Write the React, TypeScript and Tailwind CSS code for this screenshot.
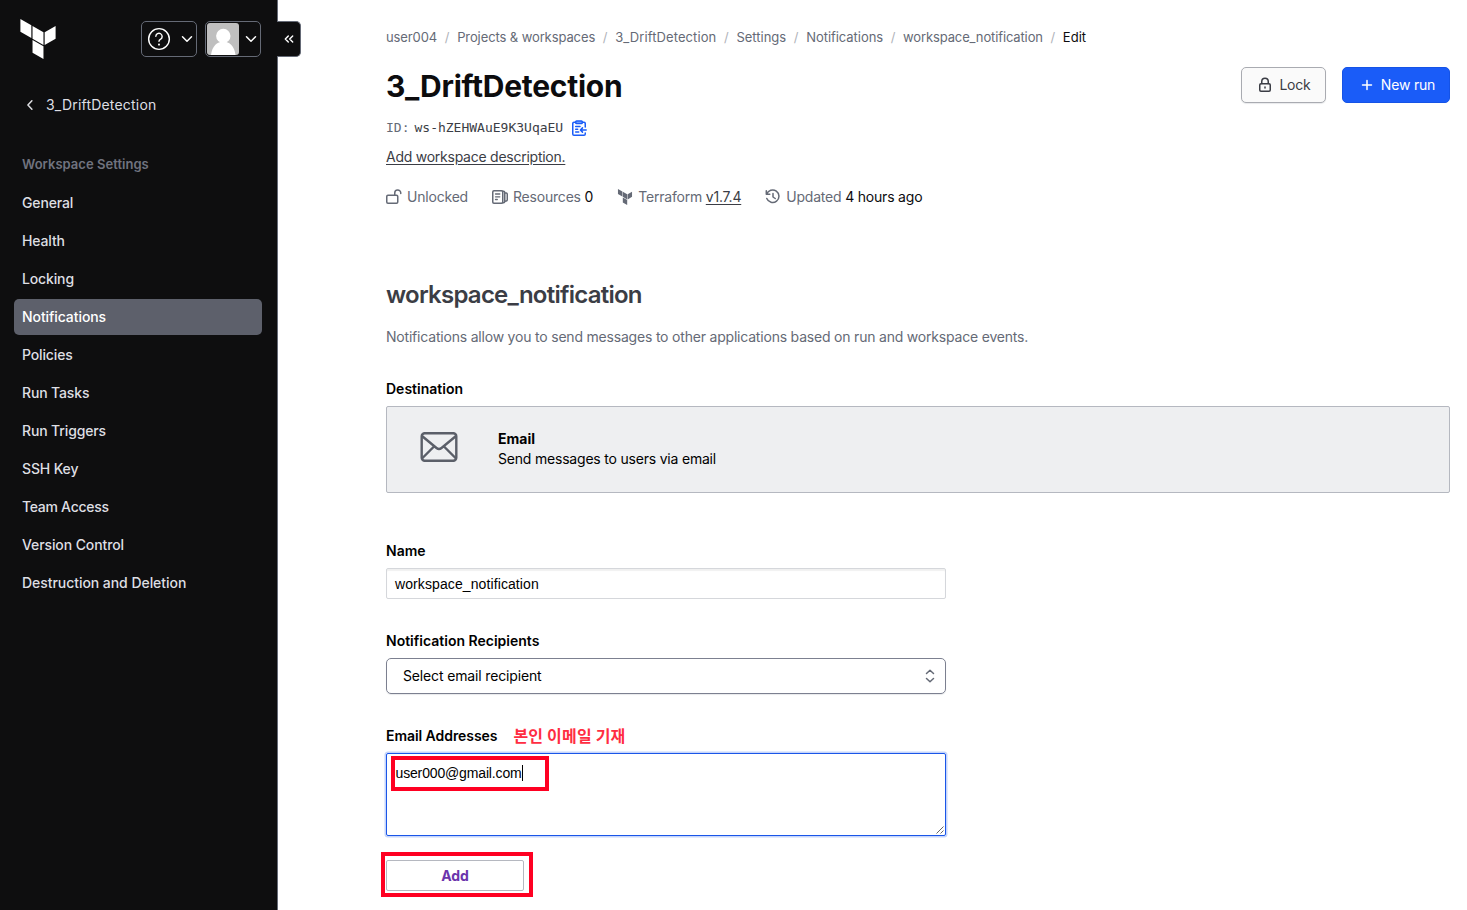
import { Fragment, type ReactNode } from "react";

const navItems = [
  { label: "General", tracking: "tracking-[-0.01em]" },
  { label: "Health", tracking: "tracking-[-0.01em]" },
  { label: "Locking", tracking: "tracking-[-0.01em]" },
  { label: "Notifications", tracking: "tracking-[-0.08px]" },
  { label: "Policies", tracking: "tracking-[-0.01em]" },
  { label: "Run Tasks", tracking: "tracking-[-0.01em]" },
  { label: "Run Triggers", tracking: "tracking-[-0.01em]" },
  { label: "SSH Key", tracking: "tracking-[-0.01em]" },
  { label: "Team Access", tracking: "tracking-[-0.28px]" },
  { label: "Version Control", tracking: "tracking-[-0.1px]" },
  { label: "Destruction and Deletion", tracking: "tracking-[-0.05px]" },
];

const crumbs = [
  { label: "user004", tracking: "tracking-[-0.1px]" },
  { label: "Projects & workspaces", tracking: "tracking-[-0.1px]" },
  { label: "3_DriftDetection", tracking: "tracking-[0.1px]" },
  { label: "Settings", tracking: "tracking-normal" },
  { label: "Notifications", tracking: "tracking-[-0.05px]" },
  { label: "workspace_notification", tracking: "tracking-[-0.13px]" },
];

function Icon({ children, className = "size-4", w = 1.5 }: { children: ReactNode; className?: string; w?: number }) {
  return (
    <svg
      viewBox="0 0 16 16"
      className={`shrink-0 ${className}`}
      fill="none"
      stroke="currentColor"
      strokeWidth={w}
      strokeLinecap="round"
      strokeLinejoin="round"
    >
      {children}
    </svg>
  );
}

function Terraform({ className }: { className: string }) {
  return (
    <svg viewBox="0 0 24 24" className={`shrink-0 ${className}`} fill="currentColor">
      <path d="M1.44 0v7.575l6.561 3.79V3.787zm21.12 4.227l-6.561 3.791v7.574l6.56-3.787zM8.72 4.23v7.575l6.561 3.787V8.018zm0 8.405v7.575L15.28 24v-7.578z" />
    </svg>
  );
}

function ChevronDown() {
  return (
    <Icon>
      <path d="M3.5 5.800 8 10.3 12.500 5.800" />
    </Icon>
  );
}

function Sidebar() {
  return (
    <aside className="relative flex w-[278px] shrink-0 flex-col border-r border-[#656a76] bg-[#0e0e0f] text-[#dedfe3]">
      <div className="flex h-[57px] items-end pr-4 pl-[18px] text-white">
        <Terraform className="-mb-[2px] size-10" />
        <div className="ml-auto flex gap-2">
          <button className="flex h-9 w-14 items-center justify-between rounded-[5px] border border-[#656a76] pr-px pl-[5px]">
            <Icon className="size-6" w={0.95}>
              <circle cx="8" cy="8" r="6.9" />
              <path d="M5.9 6.2a2.1 2.1 0 1 1 3.2 1.9C8.4 8.5 8 8.8 8 9.5" />
              <path d="M8 11.7v.05" strokeWidth={1.3} />
            </Icon>
            <ChevronDown />
          </button>
          <button className="flex h-9 w-14 items-center justify-between rounded-[5px] border border-[#656a76] pr-px pl-px">
            <svg viewBox="0 0 32 32" className="size-8 rounded-[3px] bg-[#bfbfbf]" fill="#fff">
              <circle cx="16.3" cy="13" r="7.2" />
              <path d="M4 32C5 23.500 10 18.500 16.300 18.500S27.500 23.500 28.500 32z" />
            </svg>
            <ChevronDown />
          </button>
        </div>
      </div>
      <button className="absolute top-[21px] left-[277px] flex h-9 w-6 items-center justify-center rounded-r-[5px] border border-l-0 border-[#656a76] bg-[#0e0e0f] text-white">
        <Icon className="size-4" w={1.4}>
          <path d="M7.300 5 4.300 8l3 3M11.700 5l-3 3 3 3" />
        </Icon>
      </button>

      <div className="mt-[36px] flex h-6 items-center gap-2 pl-[22px] text-sm">
        <Icon>
          <path d="M9.900 3.800 5.900 8l4 4.200" />
        </Icon>
        <span className="tracking-[0.2px]">3_DriftDetection</span>
      </div>

      <h2 className="mt-[35px] pl-[22px] text-[13px] leading-6 font-semibold tracking-[0.03px] text-[#70737f]">
        Workspace Settings
      </h2>
      <nav className="mt-[9px] flex flex-col gap-0.5 px-[14px] pr-[15px]">
        {navItems.map(({ label, tracking }) => (
          <a
            key={label}
            className={`flex h-9 items-center px-2 text-sm font-medium ${tracking} ${
              label === "Notifications" ? "rounded-[5px] bg-[#5d606b] text-white" : ""
            }`}
          >
            {label}
          </a>
        ))}
      </nav>
    </aside>
  );
}

function Header() {
  return (
    <header>
      <nav className="flex h-7 items-center text-[13px] text-[#656a76]">
        {crumbs.map(({ label, tracking }) => (
          <Fragment key={label}>
            <span className={tracking}>{label}</span>
            <span className="w-5 text-center text-[#b0b3ba]">/</span>
          </Fragment>
        ))}
        <span className="text-[#0c0c0e]">Edit</span>
      </nav>

      <div className="mt-[15px] flex items-start justify-between">
        <h1 className="text-[30px] leading-[38px] font-bold tracking-[-0.27px] text-[#0c0c0e]">3_DriftDetection</h1>
        <div className="flex gap-4 text-sm tracking-[-0.2px]">
          <button className="flex h-9 w-[85px] items-center justify-center gap-[6px] rounded-[5px] border border-[#a9abb1] bg-[#fafafa] pl-px text-[#3b3d45] shadow-[0_1px_1px_rgba(101,106,118,0.15)]">
            <Icon>
              <rect x="2.750" y="6.750" width="10.500" height="7.500" rx="1.200" />
              <path d="M4.750 6.500V4.500a3.250 3.250 0 0 1 6.500 0v2M8 10v1" />
            </Icon>
            Lock
          </button>
          <button className="flex h-9 w-[108px] items-center justify-center gap-[6px] rounded-[5px] border border-[#1553e6] bg-[#1a5cf8] pl-[2px] text-white">
            <Icon>
              <path d="M8 3.500v9M3.500 8h9" />
            </Icon>
            New run
          </button>
        </div>
      </div>

      <div className="mt-[11px] flex h-6 items-center font-['DejaVu_Sans_Mono',monospace] text-[13px] text-[#3b3d45]">
        <span className="mr-[5px] text-[#656a76]">ID:</span>
        <span>ws-hZEHWAuE9K3UqaEU</span>
        <Icon className="ml-2 size-4 text-[#1a5cf8]">
          <path d="M4.500 2.250H3c-.8 0-1.250.5-1.250 1.250v10.500c0 .8.5 1.250 1.250 1.250h10c.8 0 1.250-.5 1.250-1.250V13M11.500 2.250H13c.8 0 1.250.5 1.250 1.250V7" />
          <rect x="4.750" y=".9" width="6.500" height="2.700" rx=".8" fill="#8ab0ff" />
          <path d="M4.700 6.500h4.300M4.700 9.200h2M4.700 12h3M15.200 10H9.500M11.500 7.900 9.400 10l2.100 2.100" />
        </Icon>
      </div>
      <a className="mt-[5px] block text-sm leading-6 tracking-[-0.25px] text-[#3b3d45] underline underline-offset-2">
        Add workspace description.
      </a>

      <div className="mt-4 flex h-6 items-center gap-6 text-sm tracking-[-0.2px] text-[#656a76]">
        <span className="flex items-center gap-[5px]">
          <Icon>
            <rect x=".75" y="6.250" width="11" height="8" rx="1.200" />
            <path d="M8.750 6V4a3 3 0 0 1 6-.2v.7" />
          </Icon>
          Unlocked
        </span>
        <span className="flex items-center gap-[5px]">
          <Icon>
            <rect x=".75" y="1.750" width="10" height="12.500" rx="1.200" />
            <path strokeWidth={1.3} d="M3.500 5h4.300M3.500 7.800h4.300M3.500 10.500h1.800" />
            <path d="M10.700 2.200h.8c.8 0 1.250.5 1.250 1.250v9.100c0 .7-.4 1.200-1.250 1.200h-.8M13.300 3.700c1.300 0 2 .4 2 1.500v5.600c0 1.100-.7 1.500-2 1.500" />
          </Icon>
          <span>
            Resources <span className="text-[#0c0c0e]">0</span>
          </span>
        </span>
        <span className="flex items-center gap-[5px]">
          <Terraform className="size-4" />
          <span>
            Terraform <span className="text-[#3b3d45] underline underline-offset-2">v1.7.4</span>
          </span>
        </span>
        <span className="flex items-center gap-[5px]">
          <Icon>
            <path d="M1.300 1.800v3.500h3.500M1.700 5.200A6.300 6.300 0 1 1 1.800 9.500M8 4.500V8l2.200 1.500" />
          </Icon>
          <span>
            Updated <span className="text-[#0c0c0e]">4 hours ago</span>
          </span>
        </span>
      </div>
    </header>
  );
}

function NotificationForm() {
  return (
    <section className="mt-[70px] text-sm text-black">
      <h2 className="text-[24px] leading-8 font-semibold tracking-[-0.75px] text-[#3b3d45]">workspace_notification</h2>
      <p className="mt-[14px] leading-6 tracking-[-0.2px] text-[#656a76]">
        Notifications allow you to send messages to other applications based on run and workspace events.
      </p>

      <h3 className="mt-7 leading-6 font-semibold">Destination</h3>
      <div className="mt-[5px] flex h-[87px] items-center rounded-[2px] border border-[#b5b8c0] bg-[#eeeff1] pl-[33px]">
        <svg viewBox="0 0 38 32" className="mb-[5px] h-8 w-[38px]" fill="none" stroke="#5b5f69" strokeWidth="2.4">
          <rect x="1.700" y="2.200" width="34.600" height="27.600" rx="3" />
          <path d="M2 5l14.500 12q2.500 2 5 0L36 5M2 27.500 14 15.500M36 27.500 24 15.500" />
        </svg>
        <div className="mb-[2px] ml-[40px] leading-5">
          <div className="font-bold">Email</div>
          <div className="tracking-[-0.2px]">Send messages to users via email</div>
        </div>
      </div>

      <h3 className="mt-[46px] leading-6 font-semibold">Name</h3>
      <div className="mt-[5px] flex h-[31px] w-[560px] items-center rounded-[2px] border border-[#d5d7db] pl-2 font-['Liberation_Sans',sans-serif] tracking-[0.1px] shadow-[inset_0_2px_1px_rgba(0,0,0,0.06)]">
        workspace_notification
      </div>

      <h3 className="mt-[30px] leading-6 font-semibold">Notification Recipients</h3>
      <div className="mt-[5px] flex h-9 w-[560px] items-center justify-between rounded-[5px] border border-[#7c8090] pr-[7px] pl-4 tracking-[-0.15px] shadow-[0_1px_1px_rgba(101,106,118,0.15)]">
        Select email recipient
        <Icon className="size-4 text-[#656a76]">
          <path d="M4.500 5.500 8 2.200l3.500 3.300M4.500 10.500 8 13.800l3.500-3.300" />
        </Icon>
      </div>

      <div className="mt-[30px] flex h-6 items-center">
        <h3 className="font-semibold tracking-[-0.06px]">Email Addresses</h3>
        <span className="-mt-[2px] ml-4 font-['Noto_Sans_CJK_KR',sans-serif] text-base leading-6 font-bold tracking-[0.2px] text-[#ff2d42]">
          본인 이메일 기재
        </span>
      </div>
      <div className="relative mt-[5px] flex h-[83px] w-[560px] items-start rounded-[2px] border border-[#1a56e8] pt-[11px] pl-[8.5px] font-['Liberation_Sans',sans-serif] leading-5 shadow-[0_0_0_1.5px_#c5d5fb]">
        <span className="border-r border-black leading-4 tracking-[-0.15px]">user000@gmail.com</span>
        <span className="absolute top-[2px] left-1 h-[35px] w-[158px] border-4 border-[#ff0022]" />
        <svg viewBox="0 0 8 8" className="absolute right-px bottom-px size-2" stroke="#555" strokeWidth="0.9">
          <path d="M.5 7.500l7-7M4.500 7.500l3-3" />
        </svg>
      </div>

      <div className="relative mt-6 flex h-[31px] w-[138px] items-center justify-center rounded-[2px] border border-[#b5b8c0] font-bold tracking-[-0.1px] text-[#6b34ac]">
        Add
        <span className="absolute -top-[9px] -left-[6px] h-[45px] w-[152px] border-4 border-[#ff0022]" />
      </div>
    </section>
  );
}

export default function App() {
  return (
    <div className="flex h-[910px] w-[1467px] overflow-hidden bg-white font-['Inter',sans-serif]">
      <Sidebar />
      <main className="flex-1 pt-6 pr-[17px] pl-[108px]">
        <Header />
        <NotificationForm />
      </main>
    </div>
  );
}
